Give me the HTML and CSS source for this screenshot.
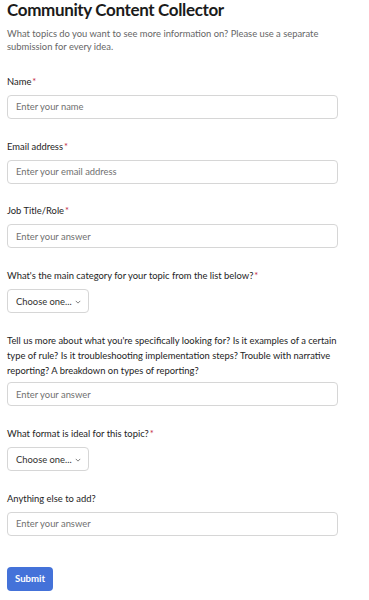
FILE: index.html
```html
<!DOCTYPE html>
<html lang="en">
<head>
<meta charset="utf-8">
<title>Community Content Collector</title>
<link rel="stylesheet" href="styles.css">
</head>
<body>
<main class="form">
  <h1 class="title">Community Content Collector</h1>
  <p class="desc">What topics do you want to see more information on? Please use a separate submission for every idea.</p>

  <div class="field first">
    <label class="label">Name<span class="req">*</span></label>
    <div class="input">Enter your name</div>
  </div>

  <div class="field">
    <label class="label">Email address<span class="req">*</span></label>
    <div class="input">Enter your email address</div>
  </div>

  <div class="field">
    <label class="label">Job Title/Role<span class="req">*</span></label>
    <div class="input">Enter your answer</div>
  </div>

  <div class="field">
    <label class="label">What's the main category for your topic from the list below?<span class="req">*</span></label>
    <div class="select"><span>Choose one...</span><svg class="chev" viewBox="0 0 8 5" width="6" height="4"><path d="M1 1l3 3 3-3" fill="none" stroke="#555" stroke-width="1"/></svg></div>
  </div>

  <div class="field">
    <label class="label multi">Tell us more about what you're specifically looking for? Is it examples of a certain type of rule? Is it troubleshooting implementation steps? Trouble with narrative reporting? A breakdown on types of reporting?</label>
    <div class="input">Enter your answer</div>
  </div>

  <div class="field">
    <label class="label">What format is ideal for this topic?<span class="req">*</span></label>
    <div class="select"><span>Choose one...</span><svg class="chev" viewBox="0 0 8 5" width="6" height="4"><path d="M1 1l3 3 3-3" fill="none" stroke="#555" stroke-width="1"/></svg></div>
  </div>

  <div class="field">
    <label class="label">Anything else to add?</label>
    <div class="input">Enter your answer</div>
  </div>

  <button class="submit" type="button">Submit</button>
</main>
</body>
</html>
```

FILE: styles.css
```css
html, body {
  margin: 0;
  padding: 0;
  background: #ffffff;
}
body {
  font-family: "Lato", "Open Sans", sans-serif;
  color: #242424;
}
.form {
  padding: 0 7px;
  width: 331px;
  display: flex;
  flex-direction: column;
}
.title {
  margin: 0;
  font-size: 17px;
  font-weight: 700;
  letter-spacing: -0.35px;
  line-height: 20px;
  color: #1b1b1b;
}
.desc {
  margin: 7px 0 0;
  font-size: 9.4px;
  line-height: 13.4px;
  color: #666666;
}
.field {
  display: flex;
  flex-direction: column;
  align-items: flex-start;
  margin-top: 20.8px;
}
.field.first {
  margin-top: 21px;
}
.label {
  font-size: 9.4px;
  line-height: 14px;
  color: #242424;
  margin-bottom: 6px;
}
.label.multi {
  line-height: 14.8px;
  margin-bottom: 4px;
}
.req {
  color: #c4314b;
  margin-left: 1px;
}
.input {
  box-sizing: border-box;
  width: 331px;
  height: 24px;
  border: 1px solid #d6d6d6;
  border-radius: 4px;
  padding: 0 8px;
  display: flex;
  align-items: center;
  font-size: 9.4px;
  color: #707070;
}
.select {
  box-sizing: border-box;
  height: 24px;
  border: 1px solid #d6d6d6;
  border-radius: 4px;
  padding: 0 7px 0 8px;
  display: flex;
  align-items: center;
  gap: 3px;
  white-space: nowrap;
  font-size: 9.4px;
  color: #323130;
}
.chev {
  flex: none;
  margin-top: 1px;
}
.submit {
  align-self: flex-start;
  margin-top: 31px;
  width: 46px;
  height: 24px;
  border: none;
  border-radius: 4px;
  background: #4472d9;
  color: #ffffff;
  font-family: "Lato", "Open Sans", sans-serif;
  font-size: 9.6px;
  font-weight: 700;
  padding: 0;
}
```
